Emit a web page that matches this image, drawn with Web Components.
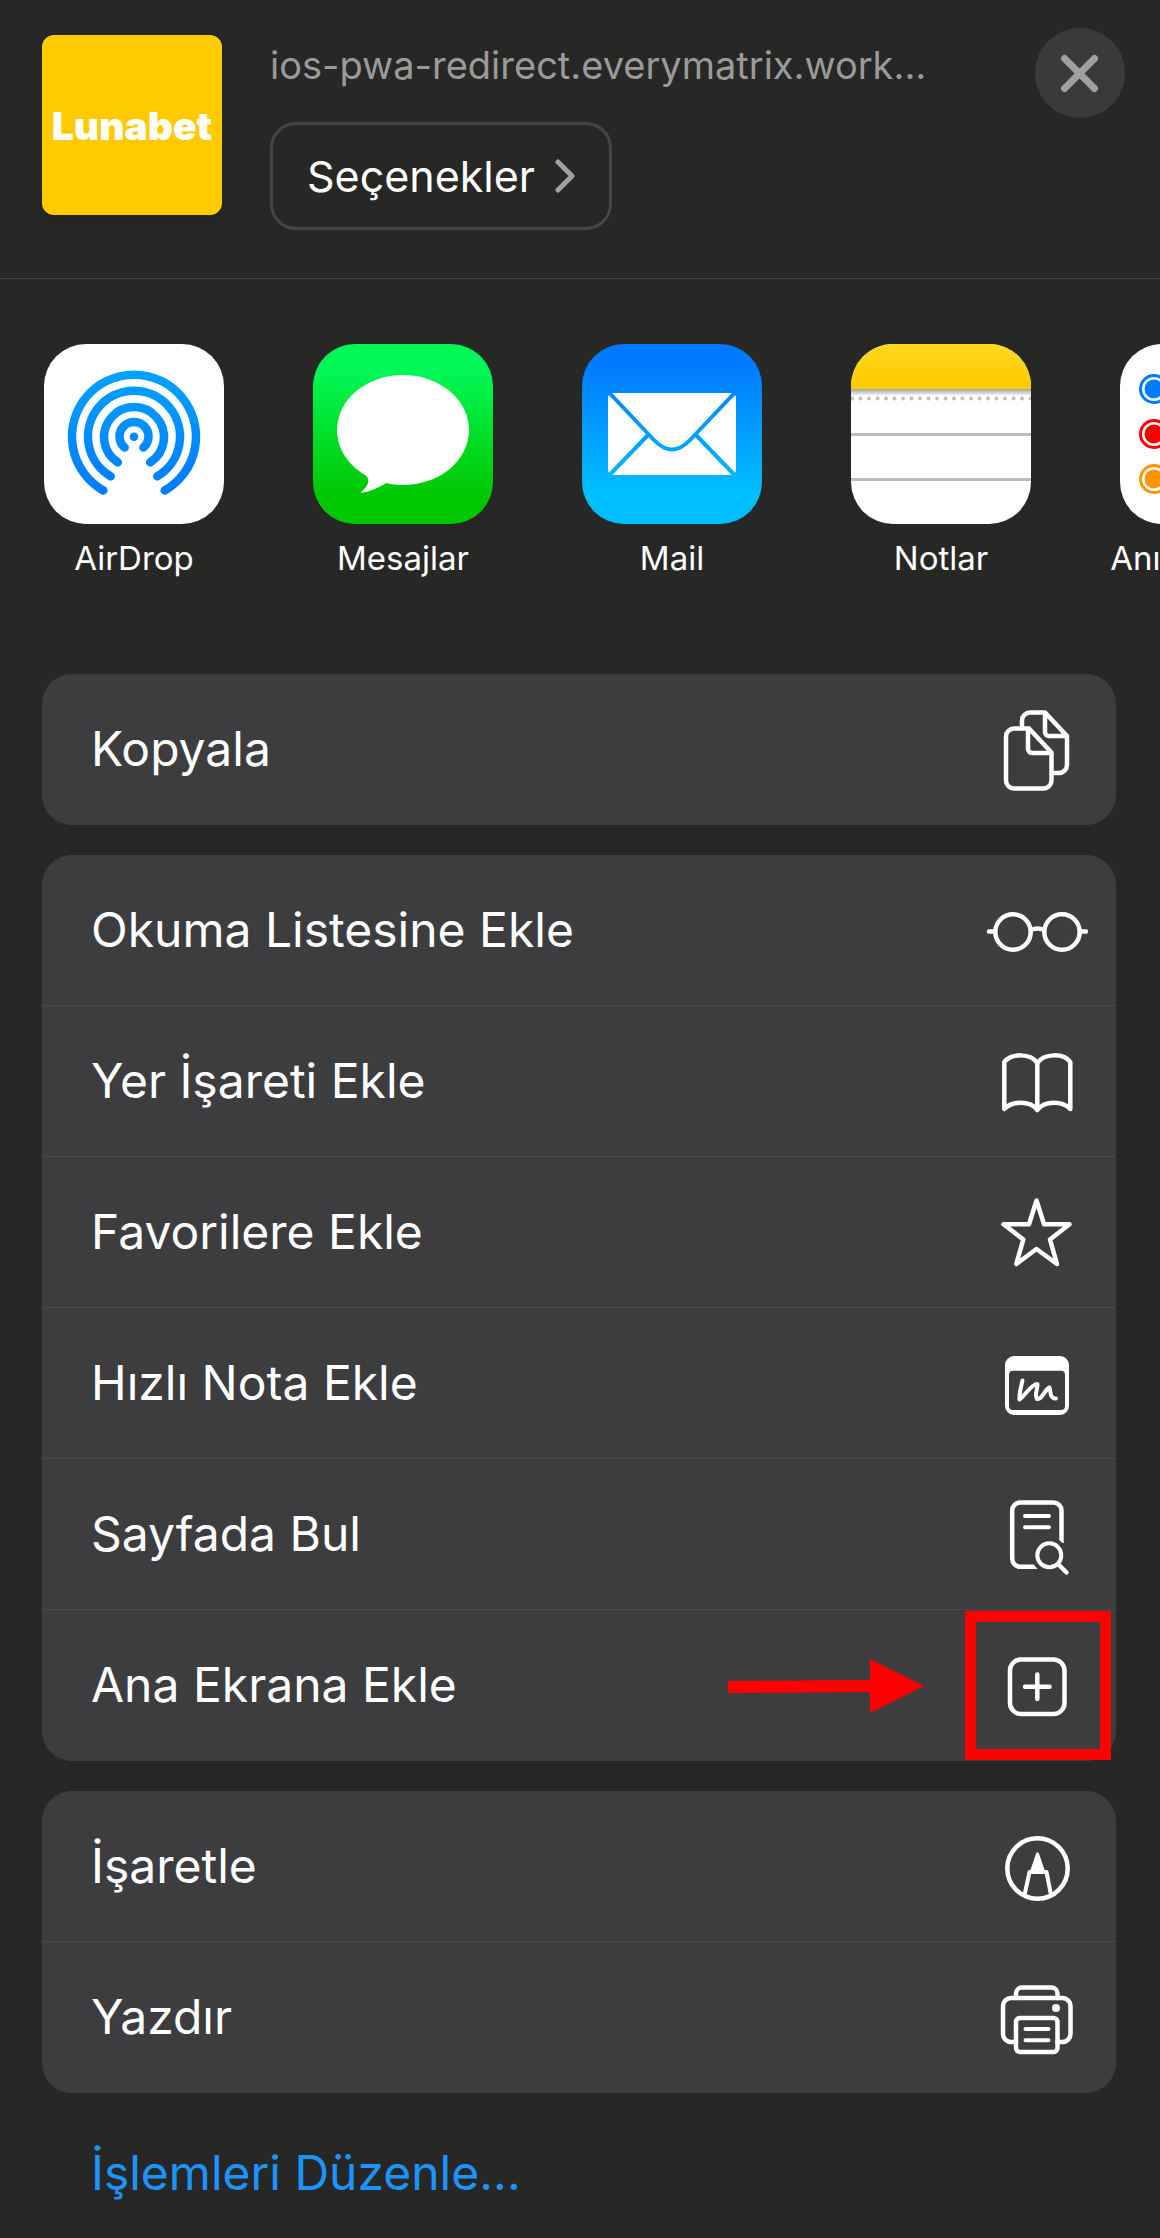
<!DOCTYPE html>
<html lang="tr">
<head>
<meta charset="utf-8">
<meta name="viewport" content="width=device-width, initial-scale=1">
<title>Paylaş</title>
<style>
  body {
    background-color: #272726;
    color: #ffffff;
    font-family: Inter, "Liberation Sans", sans-serif;
    margin: 0;
  }
</style>
</head>
<body>

<share-sheet>
  <share-header slot="header" brand="Lunabet" address="ios-pwa-redirect.everymatrix.work...">Seçenekler</share-header>

  <share-app slot="apps" icon="airdrop">AirDrop</share-app>
  <share-app slot="apps" icon="messages">Mesajlar</share-app>
  <share-app slot="apps" icon="mail">Mail</share-app>
  <share-app slot="apps" icon="notes">Notlar</share-app>
  <share-app slot="apps" icon="reminders">Anımsatıcılar</share-app>

  <share-group>
    <share-action icon="copy">Kopyala</share-action>
  </share-group>
  <share-group>
    <share-action icon="glasses">Okuma Listesine Ekle</share-action>
    <share-action icon="book">Yer İşareti Ekle</share-action>
    <share-action icon="star">Favorilere Ekle</share-action>
    <share-action icon="note">Hızlı Nota Ekle</share-action>
    <share-action icon="find">Sayfada Bul</share-action>
    <share-action icon="add">Ana Ekrana Ekle<share-pointer slot="mark"></share-pointer></share-action>
  </share-group>
  <share-group>
    <share-action icon="markup">İşaretle</share-action>
    <share-action icon="print">Yazdır</share-action>
  </share-group>
  <share-link href="#edit">İşlemleri Düzenle...</share-link>
</share-sheet>

<script>
// Action icons, stroked in the current color
const ICONS = {
  copy: `
    <path d="M38 27V21.500a8 8 0 0 1 8-8H61L83 37V66a8 8 0 0 1-8 8H70M61 14V33a4 4 0 0 0 4 4H83" />
    <path d="M45 29.500H30a8 8 0 0 0-8 8V81.500a8 8 0 0 0 8 8H59.500a8 8 0 0 0 8-8V53.500L45 29.500M44 30V50a4 4 0 0 0 4 4H67" />`,
  glasses: `
    <circle cx="29" cy="52" r="17.700" />
    <circle cx="78" cy="52" r="17.700" />
    <path d="M47 50q6.500-3 13 0M5 51.500H10M97 51.500H102" />`,
  book: `
    <path d="M20.300 31C27 22 47 22 53.300 32C60 22 80 22 86.300 31V78C79 70 61 69 53.300 79C46 69 28 70 20.300 78ZM53.300 32V79" />`,
  star: `
    <path d="M52.500 18.500L60 42.300H85.500L66 57.500L73 82L52.500 67L32.300 82L39.300 57.500L19.500 42.300H45Z" />`,
  note: `
    <path fill="currentColor" fill-rule="evenodd" stroke="none" d="M30 23H76a9 9 0 0 1 9 9V73a9 9 0 0 1-9 9H30a9 9 0 0 1-9-9V32a9 9 0 0 1 9-9ZM29 37.700a4 4 0 0 0-4 4V73a4 4 0 0 0 4 4H77a4 4 0 0 0 4-4V41.700a4 4 0 0 0-4-4Z" />
    <path stroke-width="4" d="M38.500 47.500C37 54 35 60 35.500 66.500C41 63 47 51 53.500 51C54 55 50 62 53 66C58 67 61 56 65.500 54.500C67 57 65 66 72 65.500" />`,
  find: `
    <path stroke-linecap="butt" d="M77.500 59V26.500a8 8 0 0 0-8-8H36.200a8 8 0 0 0-8 8V74.800a8 8 0 0 0 8 8H54" />
    <path stroke-width="4" d="M41 32H65M41 43.300H65" />
    <circle class="gap" cx="65.300" cy="71.300" r="15" />
    <circle cx="65.300" cy="71.300" r="12" stroke-width="4" />
    <path d="M74.500 80.500L82.500 88.500" />`,
  add: `
    <rect x="26" y="24.500" width="54.500" height="54.500" rx="11" />
    <path d="M53.300 39.500V64M41 51.700H65.500" />`,
  markup: `
    <circle cx="53.500" cy="52.500" r="30.200" />
    <path stroke-width="4" d="M40.500 79L45.500 56H62.500L67 79" />
    <path fill="currentColor" stroke-width="3" d="M53.500 38L47.500 55.500H59.500Z" />`,
  print: `
    <path d="M32 31V26.500a6 6 0 0 1 6-6H67.500a6 6 0 0 1 6 6V31" />
    <path d="M32 75H27a8 8 0 0 1-8-8V39a8 8 0 0 1 8-8H78.500a8 8 0 0 1 8 8V67a8 8 0 0 1-8 8H73.500" />
    <rect x="32" y="51" width="41.500" height="34" rx="4" />
    <path stroke-width="4" d="M41.500 62H64.500M41.500 73.300H64.500" />
    <circle cx="72" cy="41" r="4" fill="currentColor" stroke="none" />`
};

// Application tiles, drawn on a square of 180
const TILES = {
  airdrop: `
    <defs><linearGradient id="g" gradientUnits="userSpaceOnUse" x1="0" y1="27" x2="0" y2="150"><stop offset="0" stop-color="#00a2ff" /><stop offset="1" stop-color="#007aff" /></linearGradient></defs>
    <rect width="180" height="180" fill="#ffffff" />
    <g fill="none" stroke="url(#g)" stroke-width="8.500" stroke-linecap="round">
      <path d="M59.300 146.500A62 62 0 1 1 120.700 146.500" />
      <path d="M66.700 132.300A46 46 0 1 1 113.300 132.300" />
      <path d="M73.800 118.300A30 30 0 1 1 106.200 118.300" />
      <path d="M80.600 103.500A14.500 14.500 0 1 1 99.400 103.500" />
    </g>
    <circle cx="90" cy="92.700" r="4.300" fill="#0088ff" />`,
  messages: `
    <defs><linearGradient id="g" x1="0" y1="0" x2="0" y2="1"><stop offset=".15" stop-color="#00f755" /><stop offset=".85" stop-color="#00c700" /></linearGradient></defs>
    <rect width="180" height="180" fill="url(#g)" />
    <ellipse cx="90" cy="86" rx="66" ry="55" fill="#ffffff" />
    <path d="M50 128C57 134 58 140 47.500 148.700C58 148 66 143 73 139.300L80 120Z" fill="#ffffff" />`,
  mail: `
    <defs><linearGradient id="g" gradientUnits="userSpaceOnUse" x1="0" y1="20" x2="0" y2="150"><stop offset="0" stop-color="#007aff" /><stop offset="1" stop-color="#00bfff" /></linearGradient></defs>
    <rect width="180" height="180" fill="url(#g)" />
    <rect x="26" y="49" width="128" height="82" rx="5" fill="#ffffff" />
    <path d="M27 48.500L71 95C84 109 96 109 109 95L153 48.500M27 131.500L66.500 90.500M153 131.500L113.500 90.500" fill="none" stroke="url(#g)" stroke-width="4" />`,
  notes: `
    <defs>
      <linearGradient id="g" x1="0" y1="0" x2="0" y2="1"><stop offset="0" stop-color="#ffd91f" /><stop offset="1" stop-color="#ffc800" /></linearGradient>
      <linearGradient id="s" x1="0" y1="0" x2="0" y2="1"><stop offset="0" stop-color="#a0a0a0" /><stop offset="1" stop-color="#ffffff" /></linearGradient>
    </defs>
    <rect width="180" height="180" fill="#ffffff" />
    <rect width="180" height="45" fill="url(#g)" />
    <rect y="45" width="180" height="7" fill="url(#s)" />
    <path d="M1 54.500H180" stroke="#c0c0c0" stroke-width="4" stroke-linecap="round" stroke-dasharray="0 8.500" />
    <path d="M0 90.500H180M0 135.500H180" stroke="#bdbdbd" stroke-width="3" />`,
  reminders: `
    <rect width="180" height="180" fill="#ffffff" />
    <g fill="none" stroke-width="3">
      <circle cx="34" cy="45" r="13.500" stroke="#007aff" /><circle cx="34" cy="45" r="9.500" fill="#007aff" />
      <circle cx="34" cy="90" r="13.500" stroke="#ff0000" /><circle cx="34" cy="90" r="9.500" fill="#ff0000" />
      <circle cx="34" cy="135" r="13.500" stroke="#ff9500" /><circle cx="34" cy="135" r="9.500" fill="#ff9500" />
    </g>
    <path d="M60 45H180M60 90H180M60 135H180" stroke="#c7c7cc" stroke-width="3" />`
};

function attach( element, html ) {
  const template = document.createElement( 'template' );
  template.innerHTML = html;
  element.attachShadow( {mode: 'open'} );
  element.shadowRoot.appendChild( template.content.cloneNode( true ) );
}

class ShareSheet extends HTMLElement {
  constructor() {
    super();

    attach( this, /* template */ `
      <style>
        :host {
          display: block;
          overflow: hidden;
        }

        nav {
          display: flex;
          gap: 89px;
          overflow: hidden;
          padding: 65px 0 96px 44px;
        }

        main {
          display: flex;
          flex-direction: column;
          gap: 30px;
          padding: 0 44px 35px 42px;
        }
      </style>
      <slot name="header"></slot>
      <nav aria-label="Uygulamalar"><slot name="apps"></slot></nav>
      <main><slot></slot></main>
    ` );
  }
}

class ShareHeader extends HTMLElement {
  constructor() {
    super();

    attach( this, /* template */ `
      <style>
        :host {
          align-items: flex-start;
          border-bottom: 1px solid #454547;
          box-sizing: border-box;
          display: flex;
          gap: 48px;
          padding: 28px 35px 48px 42px;
        }

        .brand {
          align-items: center;
          background-color: #ffcb00;
          border-radius: 12px;
          box-shadow: 0 4px 16px rgba( 0, 0, 0, 0.15 );
          display: flex;
          flex: none;
          font-size: 39px;
          font-weight: 900;
          height: 180px;
          justify-content: center;
          margin-top: 7px;
          width: 180px;
        }

        .details {
          flex: 1;
          min-width: 0;
          padding-top: 13px;
        }

        p {
          color: #9a9a9a;
          font-size: 38px;
          line-height: 48px;
          margin: 0 0 33px 0;
          overflow: hidden;
          text-overflow: ellipsis;
          white-space: nowrap;
        }

        button {
          color: inherit;
          cursor: pointer;
          font-family: inherit;
        }

        .options {
          align-items: center;
          background: none;
          border: 3px solid #464648;
          border-radius: 26px;
          display: flex;
          font-size: 43px;
          gap: 20px;
          height: 108px;
          padding: 0 34px;
        }

        .close {
          background-color: #3a3a3a;
          border: none;
          border-radius: 50%;
          flex: none;
          height: 90px;
          padding: 0;
          width: 90px;
        }

        svg {
          display: block;
          fill: none;
          stroke: #a0a0a0;
          stroke-linecap: round;
          stroke-linejoin: round;
        }
      </style>
      <div class="brand"></div>
      <div class="details">
        <p></p>
        <button class="options" type="button">
          <slot></slot>
          <svg width="20" height="34" viewBox="0 0 20 34" stroke-width="5"><path d="M3 3L17 17L3 31" /></svg>
        </button>
      </div>
      <button class="close" type="button" aria-label="Kapat">
        <svg width="90" height="90" viewBox="0 0 90 90" stroke-width="7"><path d="M29.500 30.500L59.500 60.500M59.500 30.500L29.500 60.500" /></svg>
      </button>
    ` );
  }

  connectedCallback() {
    this.shadowRoot.querySelector( '.brand' ).textContent = this.getAttribute( 'brand' );
    this.shadowRoot.querySelector( 'p' ).textContent = this.getAttribute( 'address' );
  }
}

class ShareApp extends HTMLElement {
  constructor() {
    super();

    attach( this, /* template */ `
      <style>
        :host {
          display: block;
          flex: none;
          width: 180px;
        }

        button {
          align-items: center;
          background: none;
          border: none;
          color: inherit;
          cursor: pointer;
          display: flex;
          flex-direction: column;
          font-family: inherit;
          font-size: 33px;
          gap: 14px;
          line-height: 40px;
          padding: 0;
          white-space: nowrap;
          width: 100%;
        }

        svg {
          border-radius: 42px;
          display: block;
        }
      </style>
      <button type="button">
        <svg width="180" height="180" viewBox="0 0 180 180" aria-hidden="true"></svg>
        <slot></slot>
      </button>
    ` );
  }

  connectedCallback() {
    this.shadowRoot.querySelector( 'svg' ).innerHTML = TILES[this.getAttribute( 'icon' )];
  }
}

class ShareGroup extends HTMLElement {
  constructor() {
    super();

    attach( this, /* template */ `
      <style>
        :host {
          background-color: #3d3d3f;
          border-radius: 30px;
          display: block;
        }

        ::slotted( share-action:last-child ) {
          --separator-color: transparent;
        }
      </style>
      <slot></slot>
    ` );
  }
}

class ShareAction extends HTMLElement {
  constructor() {
    super();

    attach( this, /* template */ `
      <style>
        :host {
          display: block;
          position: relative;
        }

        button {
          align-items: center;
          background: none;
          border: none;
          border-bottom: 1px solid var( --separator-color, #4a4a4c );
          box-sizing: border-box;
          color: inherit;
          cursor: pointer;
          display: flex;
          font-family: inherit;
          font-size: 48px;
          justify-content: space-between;
          line-height: 60px;
          padding: 25px 28px 25px 49px;
          text-align: left;
          width: 100%;
        }

        svg {
          display: block;
          fill: none;
          flex: none;
          overflow: visible;
          stroke: currentColor;
          stroke-linecap: round;
          stroke-linejoin: round;
          stroke-width: 4.5px;
        }

        .gap { stroke: #3d3d3f; stroke-width: 6px; }
      </style>
      <button type="button">
        <span><slot></slot></span>
        <svg width="104" height="100" viewBox="0 0 104 100" aria-hidden="true"></svg>
      </button>
      <slot name="mark"></slot>
    ` );
  }

  connectedCallback() {
    this.shadowRoot.querySelector( 'svg' ).innerHTML = ICONS[this.getAttribute( 'icon' )];
  }
}

// Red arrow and frame over the end of a row
class SharePointer extends HTMLElement {
  constructor() {
    super();

    attach( this, /* template */ `
      <style>
        :host {
          display: block;
          pointer-events: none;
          position: absolute;
          right: 5px;
          top: 1px;
        }

        svg { display: block; }
      </style>
      <svg width="383" height="149" viewBox="0 0 383 149" aria-hidden="true">
        <path d="M0 70L142 69V48L196 75L142 102V81L0 82Z" fill="#ff0000" />
        <rect x="242.500" y="5.500" width="135" height="138" fill="none" stroke="#ff0000" stroke-width="11" />
      </svg>
    ` );
  }
}

class ShareLink extends HTMLElement {
  constructor() {
    super();

    attach( this, /* template */ `
      <style>
        :host {
          display: block;
          font-size: 48px;
          line-height: 60px;
          padding: 20px 49px 0 49px;
        }

        a {
          color: #1a94ff;
          text-decoration: none;
        }
      </style>
      <a><slot></slot></a>
    ` );
  }

  connectedCallback() {
    this.shadowRoot.querySelector( 'a' ).href = this.getAttribute( 'href' );
  }
}

window.customElements.define( 'share-sheet', ShareSheet );
window.customElements.define( 'share-header', ShareHeader );
window.customElements.define( 'share-app', ShareApp );
window.customElements.define( 'share-group', ShareGroup );
window.customElements.define( 'share-action', ShareAction );
window.customElements.define( 'share-pointer', SharePointer );
window.customElements.define( 'share-link', ShareLink );
</script>
</body>
</html>
